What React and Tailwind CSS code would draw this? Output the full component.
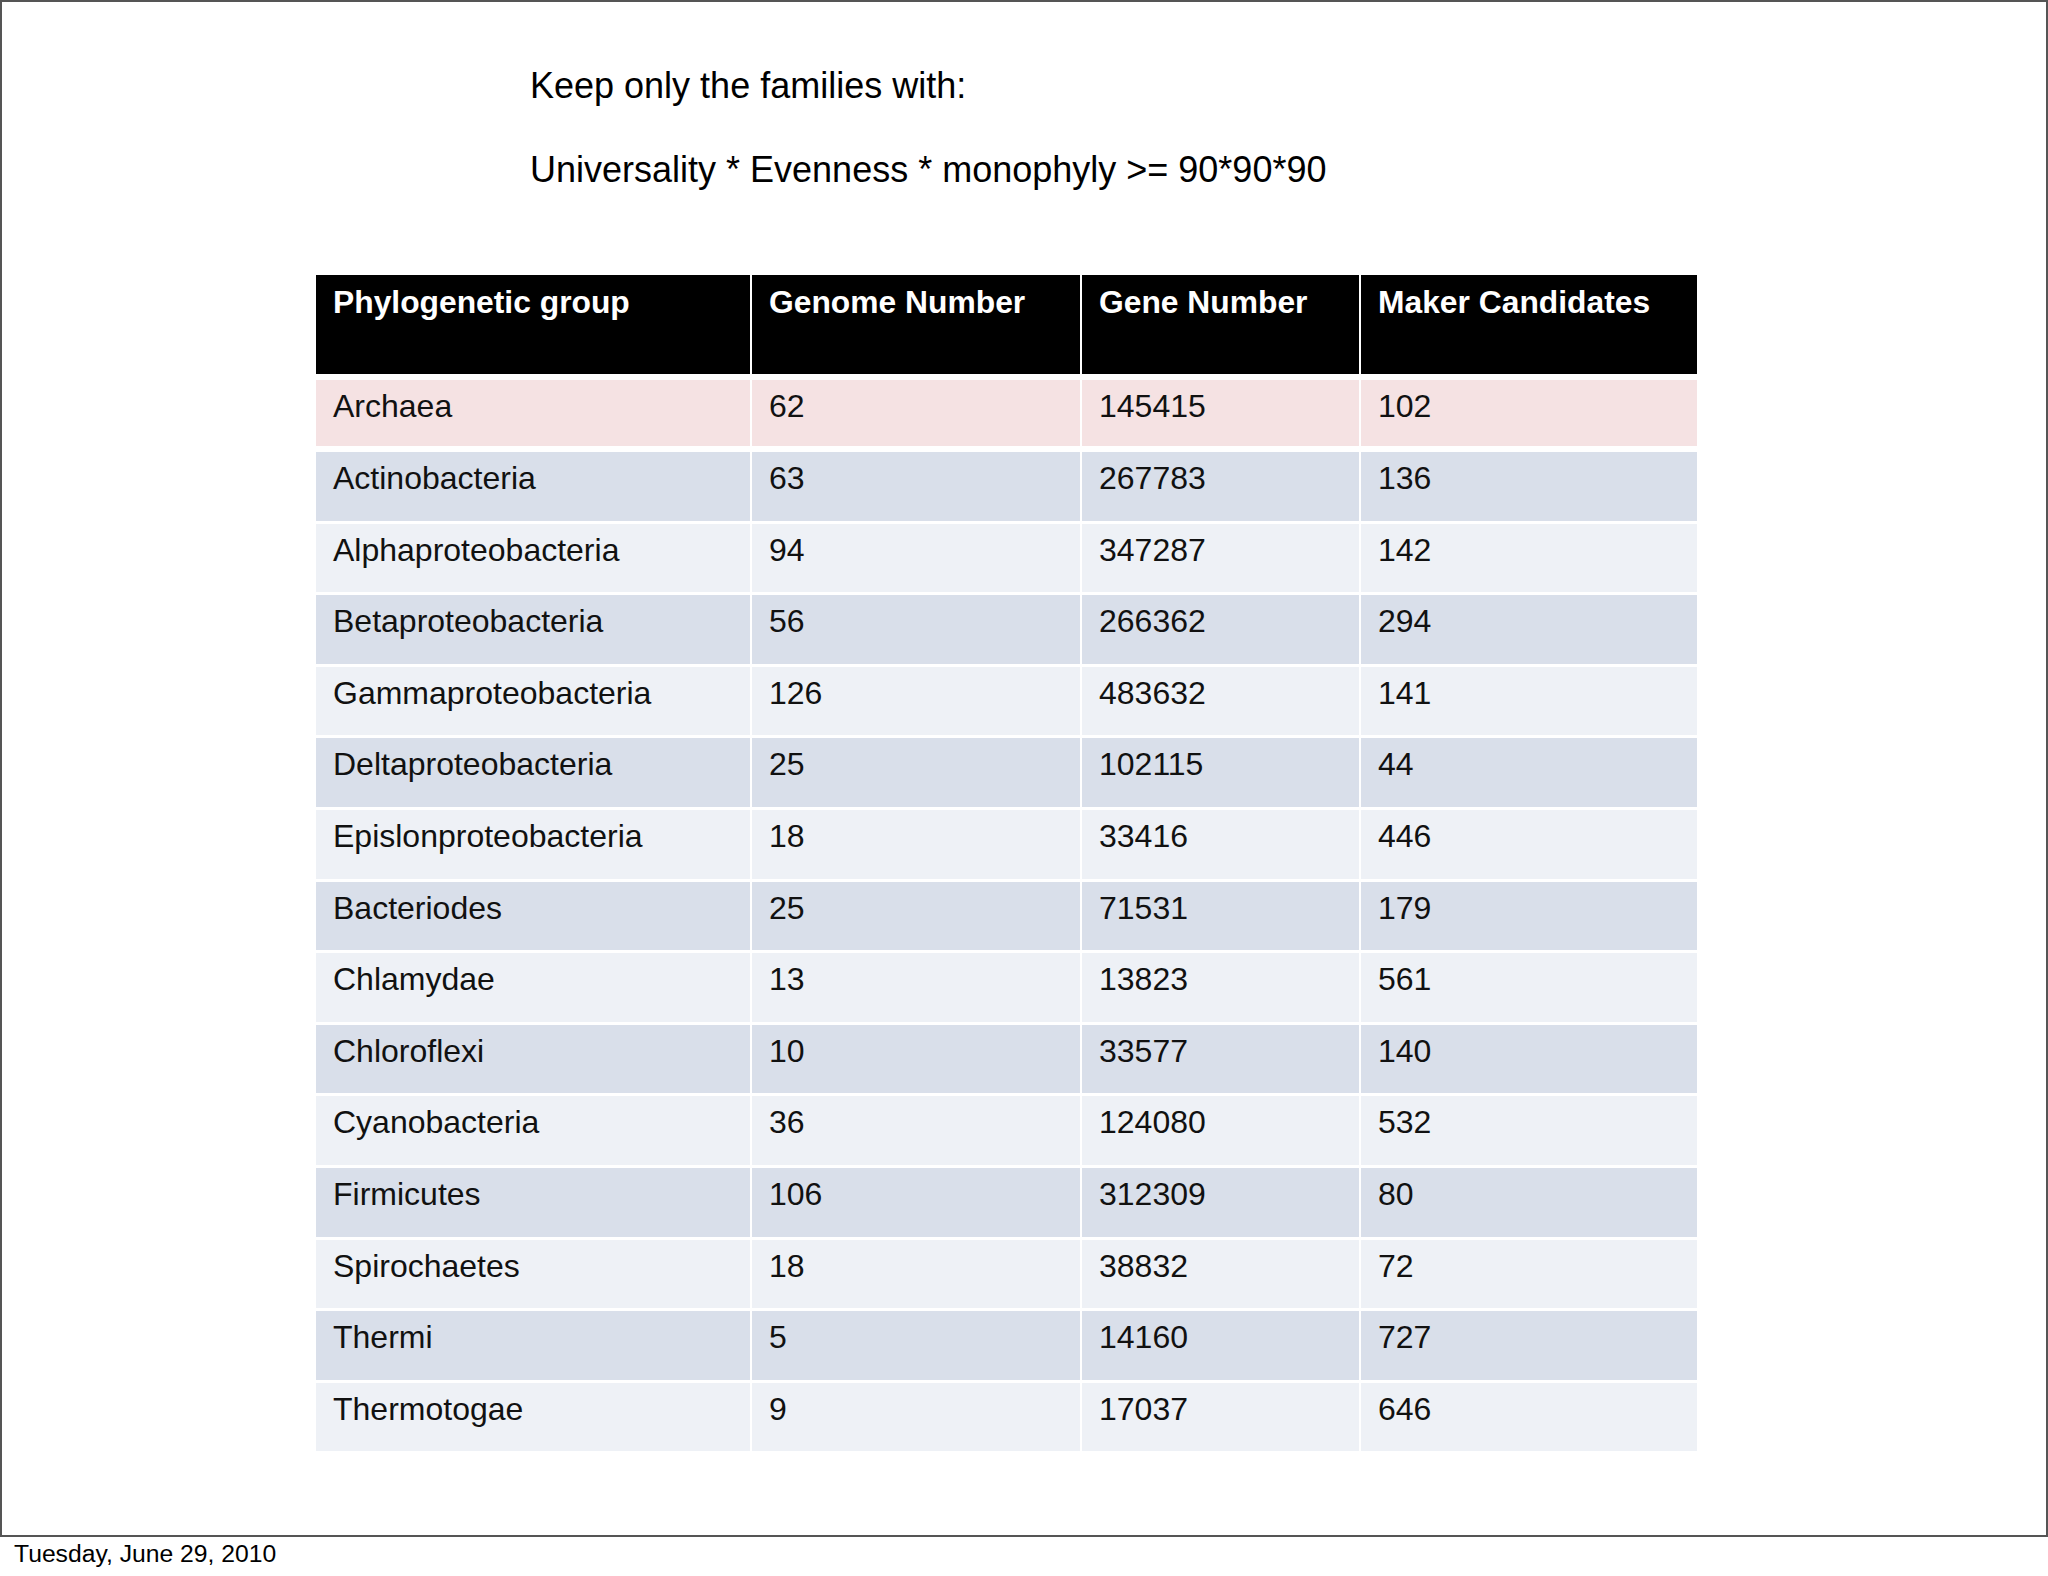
import React from "react";

const rows = [
  ["Actinobacteria", "63", "267783", "136"],
  ["Alphaproteobacteria", "94", "347287", "142"],
  ["Betaproteobacteria", "56", "266362", "294"],
  ["Gammaproteobacteria", "126", "483632", "141"],
  ["Deltaproteobacteria", "25", "102115", "44"],
  ["Epislonproteobacteria", "18", "33416", "446"],
  ["Bacteriodes", "25", "71531", "179"],
  ["Chlamydae", "13", "13823", "561"],
  ["Chloroflexi", "10", "33577", "140"],
  ["Cyanobacteria", "36", "124080", "532"],
  ["Firmicutes", "106", "312309", "80"],
  ["Spirochaetes", "18", "38832", "72"],
  ["Thermi", "5", "14160", "727"],
  ["Thermotogae", "9", "17037", "646"],
];

const cols = "grid grid-cols-[434px_328px_277px_336px] gap-x-[2px]";

const Row = ({ cells, bg, className }) => (
  <div className={`${cols} ${className}`}>
    {cells.map((c, i) => (
      <div key={i} className={`${bg} pl-[17px] pt-[8px] text-[32px] leading-[36px] text-[#111]`}>
        {c}
      </div>
    ))}
  </div>
);

export default function App() {
  return (
    <div className="w-[2048px] h-[1576px] bg-white font-['Liberation_Sans',Arial,sans-serif]">
      {/* slide frame */}
      <div className="h-[1537px] border-2 border-[#555] flex flex-col">
        <div className="ml-[528px] mt-[63px] text-[36px] leading-[42px] text-black">
          <p>Keep only the families with:</p>
          <p className="mt-[42px]">Universality * Evenness * monophyly &gt;= 90*90*90</p>
        </div>

        <div className="ml-[314px] mt-[84px] w-[1381px]">
          {/* header */}
          <div className={cols}>
            {["Phylogenetic group", "Genome Number", "Gene Number", "Maker Candidates"].map((h) => (
              <div key={h} className="bg-black h-[99px] pl-[17px] pt-[9px] text-[31.8px] leading-[36px] font-bold text-white">
                {h}
              </div>
            ))}
          </div>

          <Row
            cells={["Archaea", "62", "145415", "102"]}
            bg="bg-[#f5e2e3] h-[66px]"
            className="mt-[6px]"
          />

          {rows.map((r, i) => (
            <Row
              key={r[0]}
              cells={r}
              bg={i % 2 === 0 ? "bg-[#d9dfea] h-[68.6px]" : "bg-[#eef1f6] h-[68.6px]"}
              className={i === 0 ? "mt-[6px]" : "mt-[3px]"}
            />
          ))}
        </div>
      </div>

      <p className="pl-[14px] mt-[3px] text-[24.7px] leading-[28px] text-black">Tuesday, June 29, 2010</p>
    </div>
  );
}
